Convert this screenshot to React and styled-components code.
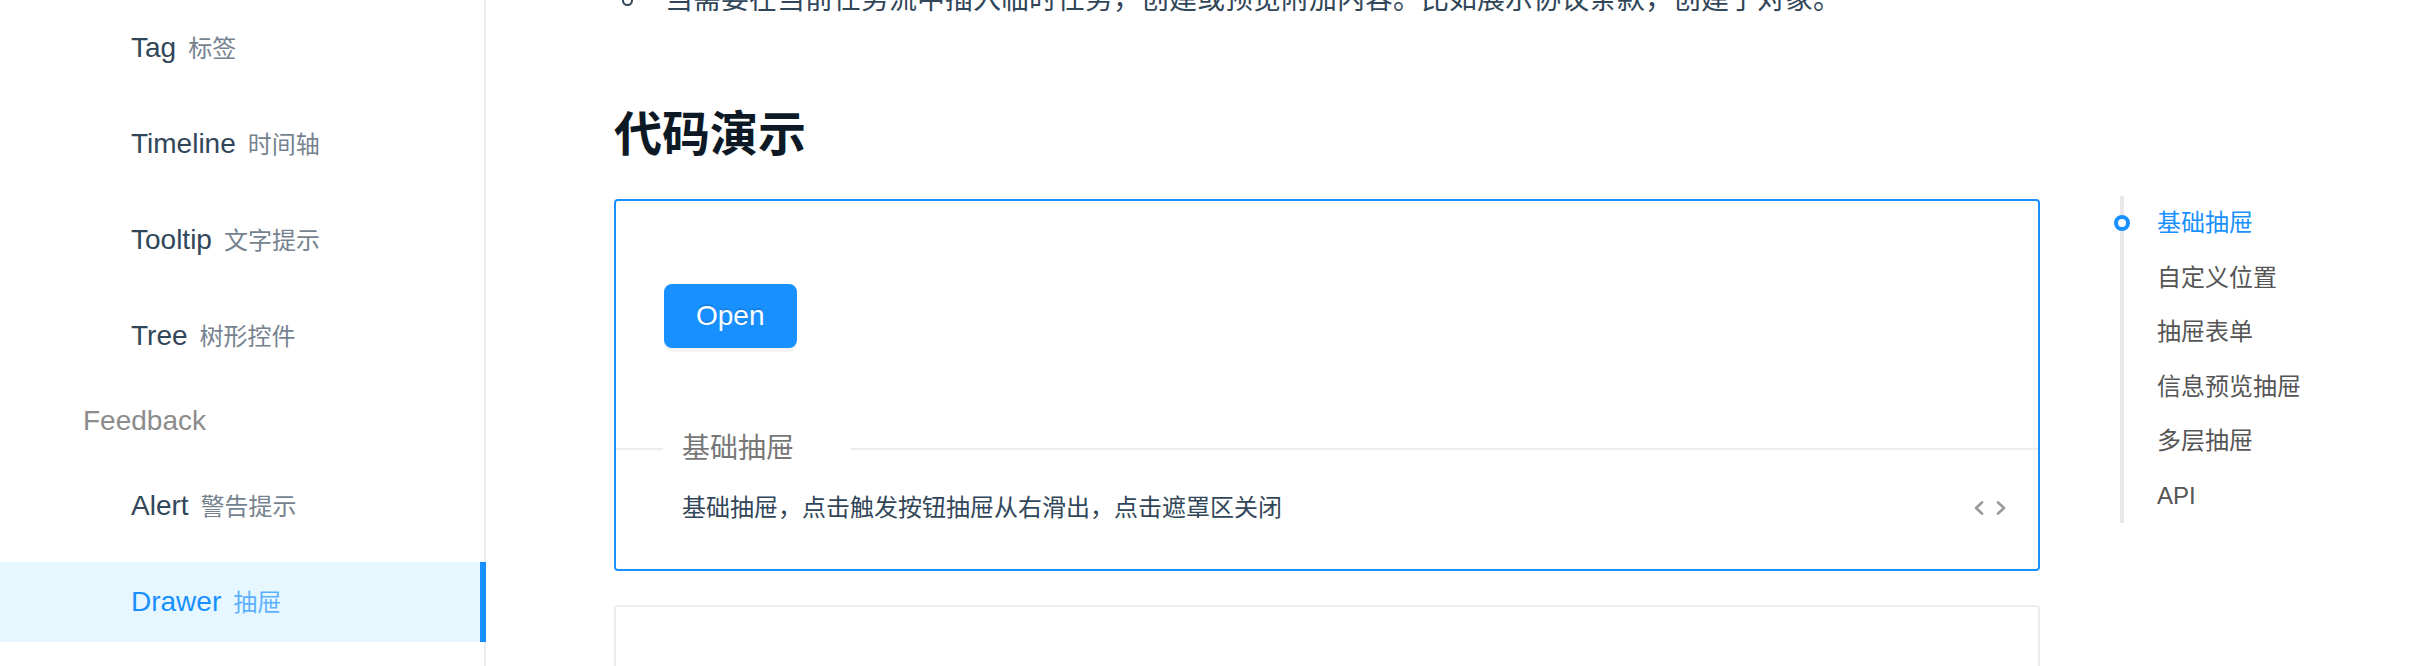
import React from 'react';
import styled, { createGlobalStyle } from 'styled-components';

const BLUE = '#1890ff';

const GlobalStyle = createGlobalStyle`
  html, body {
    margin: 0;
    padding: 0;
    background: #fff;
  }
  body {
    font-family: "Liberation Sans", "Noto Sans CJK SC", sans-serif;
    overflow: hidden;
    -webkit-font-smoothing: antialiased;
  }
  * { box-sizing: border-box; }
`;

const Layout = styled.div`
  display: flex;
  min-height: 100vh;
`;

const Sidebar = styled.aside`
  width: 486px;
  flex-shrink: 0;
  border-right: 2px solid #ebedf0;
  padding-top: 8px;
`;

const MenuItem = styled.div`
  position: relative;
  height: 80px;
  line-height: 80px;
  margin-bottom: 16px;
  padding-left: 131px;
  font-size: 28px;
  white-space: nowrap;
  color: ${(p) => (p.$active ? BLUE : '#314659')};
  background: ${(p) => (p.$active ? '#e6f7ff' : 'transparent')};

  &::after {
    content: '';
    display: ${(p) => (p.$active ? 'block' : 'none')};
    position: absolute;
    top: 0;
    bottom: 0;
    right: -2px;
    width: 6px;
    background: ${BLUE};
  }
`;

const Chinese = styled.span`
  margin-left: 12px;
  font-size: 24px;
  opacity: 0.67;
`;

const GroupTitle = styled.div`
  height: 58px;
  line-height: 58px;
  margin-bottom: 16px;
  padding-left: 83px;
  font-size: 28px;
  color: #8c8c8c;
`;

const Main = styled.main`
  flex: 1;
  min-width: 0;
  display: flex;
  align-items: flex-start;
  padding-left: 128px;
`;

const Article = styled.article`
  width: 1426px;
  flex-shrink: 0;
`;

const Intro = styled.ul`
  margin: -28px 0 0;
  padding: 0;
  list-style: none;
  font-size: 28px;
  line-height: 56px;
  color: #314659;
`;

const IntroItem = styled.li`
  display: flex;
  align-items: center;
  gap: 32px;
  padding-left: 8px;
`;

const Bullet = styled.span`
  width: 11px;
  height: 11px;
  flex-shrink: 0;
  border: 2px solid #314659;
  border-radius: 50%;
`;

const Heading = styled.h2`
  margin: 71px 0 28px;
  font-size: 48px;
  line-height: 72px;
  font-weight: 600;
  color: #0d1a26;
`;

const CodeBox = styled.section`
  border: 2px solid ${(p) => (p.$active ? BLUE : '#ebedf0')};
  border-radius: 4px;
  margin-bottom: 34px;
  min-height: ${(p) => (p.$placeholder ? '300px' : 'auto')};
`;

const Demo = styled.div`
  padding: 83px 48px 100px;
`;

const PrimaryButton = styled.button`
  height: 64px;
  padding: 0 30px;
  font-family: inherit;
  font-size: 28px;
  color: #fff;
  background: ${BLUE};
  border: 2px solid ${BLUE};
  border-radius: 8px;
  box-shadow: 0 4px 0 rgba(0, 0, 0, 0.045);
  text-shadow: 0 -2px 0 rgba(0, 0, 0, 0.12);
  cursor: pointer;
`;

const Meta = styled.div`
  position: relative;
  border-top: 2px solid #ebedf0;
`;

const MetaTitle = styled.div`
  position: absolute;
  top: -21px;
  left: 47px;
  height: 40px;
  line-height: 40px;
  padding: 0 57px 0 19px;
  background: #fff;
  font-size: 28px;
  color: #777;
`;

const Description = styled.div`
  display: flex;
  align-items: center;
  justify-content: space-between;
  padding: 40px 32px 43px 66px;
  font-size: 24px;
  line-height: 36px;
  color: #314659;
`;

const ExpandIcon = styled.svg`
  flex-shrink: 0;
  display: block;
`;

const Toc = styled.nav`
  margin-left: 80px;
  margin-top: 196px;
  border-left: 4px solid #e8e8e8;
  width: 220px;
`;

const TocItem = styled.div`
  position: relative;
  height: 54.5px;
  line-height: 54.5px;
  padding-left: 33px;
  font-size: 24px;
  white-space: nowrap;
  color: ${(p) => (p.$active ? BLUE : '#555')};
`;

const TocDot = styled.span`
  position: absolute;
  left: -10px;
  top: 19px;
  width: 16px;
  height: 16px;
  border: 4px solid ${BLUE};
  border-radius: 50%;
  background: #fff;
`;

const menu = [
  { type: 'item', en: 'Tag', zh: '标签' },
  { type: 'item', en: 'Timeline', zh: '时间轴' },
  { type: 'item', en: 'Tooltip', zh: '文字提示' },
  { type: 'item', en: 'Tree', zh: '树形控件' },
  { type: 'group', en: 'Feedback' },
  { type: 'item', en: 'Alert', zh: '警告提示' },
  { type: 'item', en: 'Drawer', zh: '抽屉', active: true },
];

const toc = ['基础抽屉', '自定义位置', '抽屉表单', '信息预览抽屉', '多层抽屉', 'API'];

export default function App() {
  return (
    <>
      <GlobalStyle />
      <Layout>
        <Sidebar>
          {menu.map((m) =>
            m.type === 'group' ? (
              <GroupTitle key={m.en}>{m.en}</GroupTitle>
            ) : (
              <MenuItem key={m.en} $active={m.active}>
                {m.en}
                <Chinese>{m.zh}</Chinese>
              </MenuItem>
            )
          )}
        </Sidebar>
        <Main>
          <Article>
            <Intro>
              <IntroItem>
                <Bullet />
                <span>当需要在当前任务流中插入临时任务，创建或预览附加内容。比如展示协议条款，创建子对象。</span>
              </IntroItem>
            </Intro>
            <Heading>代码演示</Heading>
            <CodeBox $active>
              <Demo>
                <PrimaryButton>Open</PrimaryButton>
              </Demo>
              <Meta>
                <MetaTitle>基础抽屉</MetaTitle>
                <Description>
                  <span>基础抽屉，点击触发按钮抽屉从右滑出，点击遮罩区关闭</span>
                  <ExpandIcon width="32" height="14" viewBox="0 0 32 14" fill="none">
                    <polyline points="8,1.5 2,7 8,12.5" stroke="#999" strokeWidth="2.6" strokeLinecap="round" strokeLinejoin="round" />
                    <polyline points="24,1.5 30,7 24,12.5" stroke="#999" strokeWidth="2.6" strokeLinecap="round" strokeLinejoin="round" />
                  </ExpandIcon>
                </Description>
              </Meta>
            </CodeBox>
            <CodeBox $placeholder />
          </Article>
          <Toc>
            {toc.map((t, i) => (
              <TocItem key={t} $active={i === 0}>
                {i === 0 && <TocDot />}
                {t}
              </TocItem>
            ))}
          </Toc>
        </Main>
      </Layout>
    </>
  );
}
